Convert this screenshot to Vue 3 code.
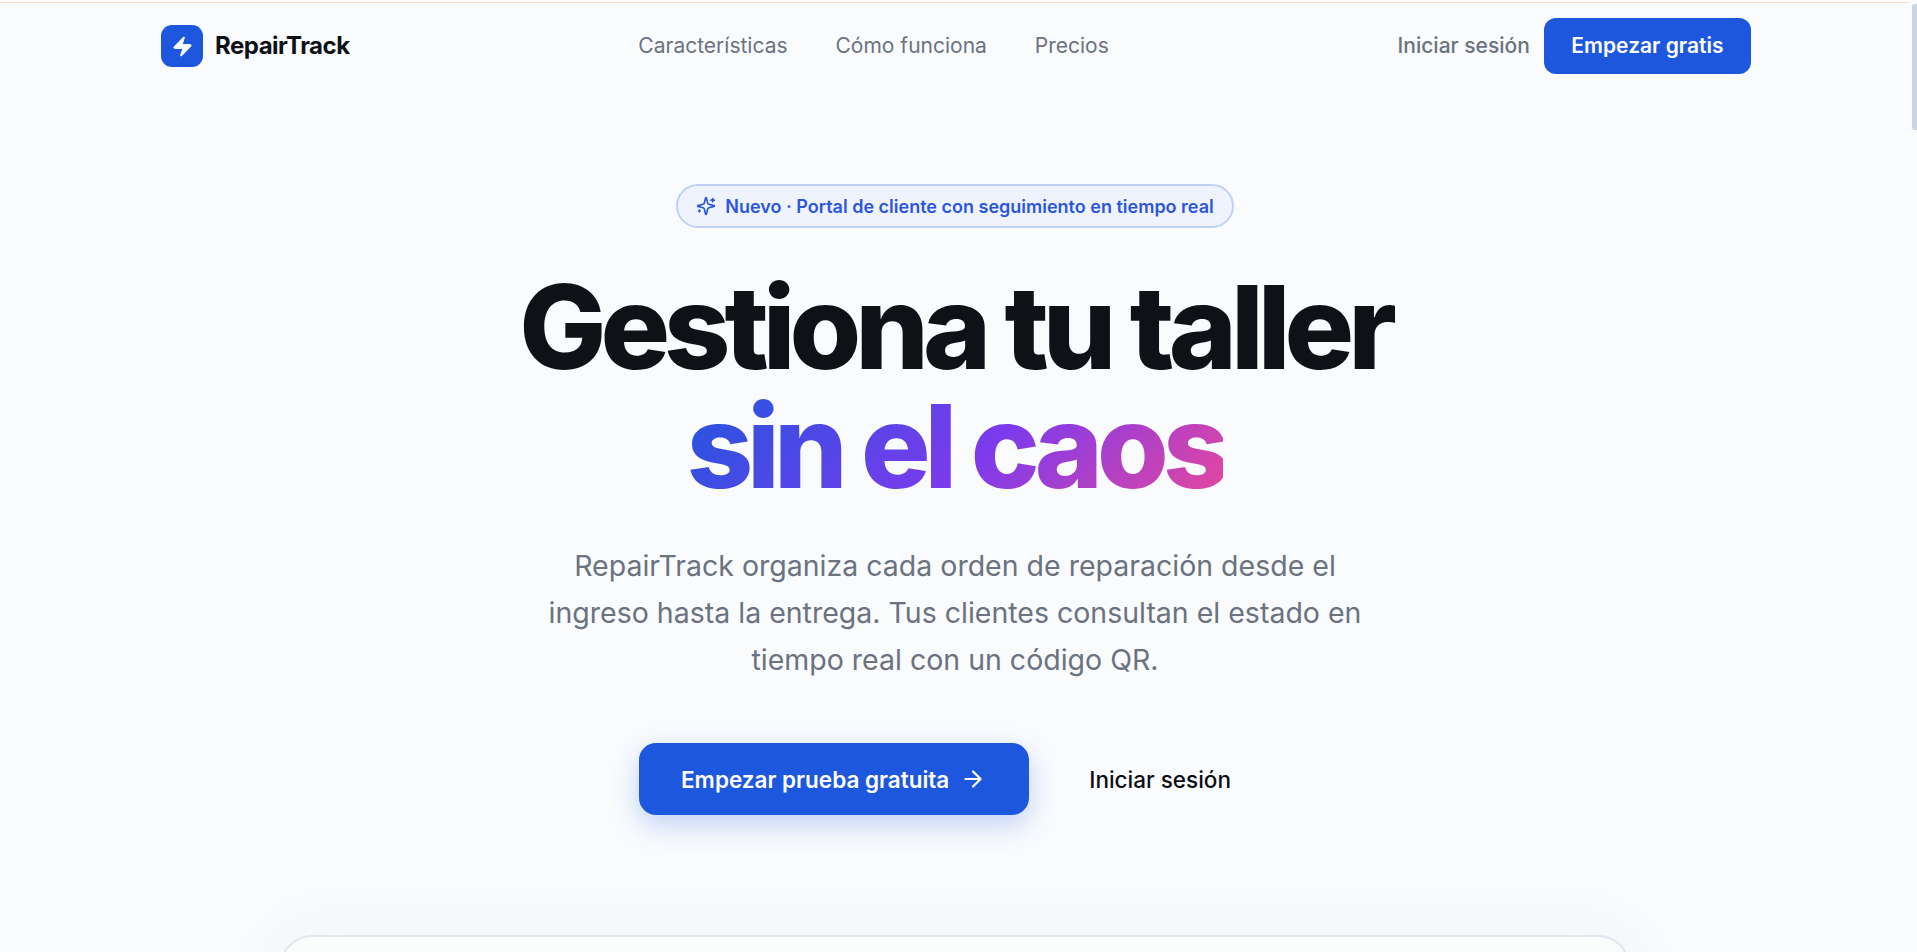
<template>
  <div class="page">
    <div class="top-line"></div>
    <header class="nav">
      <a class="brand" href="#">
        <span class="brand-icon">
          <svg width="23" height="23" viewBox="0 0 24 24" fill="#fff" stroke="#fff" stroke-width="1" stroke-linejoin="round">
            <path d="M4 14a1 1 0 0 1-.78-1.630l9.900-10.200a.5.5 0 0 1 .86.460l-1.920 6.020A1 1 0 0 0 13 10h7a1 1 0 0 1 .78 1.630l-9.900 10.200a.5.5 0 0 1-.86-.460l1.920-6.020A1 1 0 0 0 11 14z" />
          </svg>
        </span>
        <span class="brand-name">RepairTrack</span>
      </a>
      <nav class="links">
        <a v-for="link in links" :key="link" href="#">{{ link }}</a>
      </nav>
      <div class="actions">
        <a class="login" href="#">Iniciar sesión</a>
        <a class="btn-small" href="#">Empezar gratis</a>
      </div>
    </header>

    <main class="hero">
      <div class="badge">
        <svg width="20" height="20" viewBox="0 0 24 24" fill="none" stroke="currentColor" stroke-width="2" stroke-linecap="round" stroke-linejoin="round">
          <path d="M9.937 15.5A2 2 0 0 0 8.500 14.063l-6.135-1.582a.5.5 0 0 1 0-.962L8.500 9.936A2 2 0 0 0 9.937 8.500l1.582-6.135a.5.5 0 0 1 .963 0L14.063 8.500A2 2 0 0 0 15.500 9.937l6.135 1.581a.5.5 0 0 1 0 .964L15.500 14.063a2 2 0 0 0-1.437 1.437l-1.582 6.135a.5.5 0 0 1-.963 0z" />
          <path d="M20 3v4M22 5h-4M4 17v2M5 18H3" />
        </svg>
        <span>Nuevo · Portal de cliente con seguimiento en tiempo real</span>
      </div>
      <h1>
        Gestiona tu taller<br />
        <span class="gradient">sin el caos</span>
      </h1>
      <p class="lead">
        RepairTrack organiza cada orden de reparación desde el ingreso hasta la entrega. Tus clientes consultan el estado en tiempo real con un código QR.
      </p>
      <div class="cta">
        <a class="btn-main" href="#">
          Empezar prueba gratuita
          <svg width="26" height="26" viewBox="0 0 24 24" fill="none" stroke="currentColor" stroke-width="2" stroke-linecap="round" stroke-linejoin="round">
            <path d="M5 12h14M12 5l7 7-7 7" />
          </svg>
        </a>
        <a class="btn-ghost" href="#">Iniciar sesión</a>
      </div>
      <div class="preview-wrap">
        <div class="preview"></div>
      </div>
    </main>
    <div class="scroll-thumb"></div>
  </div>
</template>

<script setup>
const links = ["Características", "Cómo funciona", "Precios"];
</script>

<style>
html,
body {
  margin: 0;
  height: 100%;
  overflow: hidden;
  background: #f9fbfd;
}
</style>

<style scoped>
.page {
  position: relative;
  height: 952px;
  overflow: hidden;
  padding-right: 7px;
  box-sizing: border-box;
  background: #f9fbfd;
  font-family: Inter, "Noto Sans", sans-serif;
  color: #0f1117;
}

a {
  text-decoration: none;
  color: inherit;
}

.top-line {
  height: 2px;
  background: #fff;
  border-bottom: 1px solid #fbdcc8;
}

.nav {
  display: flex;
  justify-content: space-between;
  align-items: center;
  height: 86px;
  margin: 0 159px 0 161px;
}

.brand {
  display: flex;
  align-items: center;
  gap: 12px;
}

.brand-icon {
  display: flex;
  align-items: center;
  justify-content: center;
  width: 42px;
  height: 42px;
  border-radius: 11px;
  background: #1d57de;
}

.brand-name {
  padding-bottom: 2px;
  font-size: 24px;
  font-weight: 700;
  letter-spacing: -0.5px;
}

.links {
  display: flex;
  gap: 48px;
  padding-bottom: 2px;
  font-size: 21px;
  color: #6b7280;
}

.actions {
  display: flex;
  align-items: center;
  gap: 14px;
}

.login {
  padding-bottom: 2px;
  font-size: 21px;
  font-weight: 500;
  color: #6b7280;
}

.btn-small {
  padding: 0 27.5px;
  line-height: 55px;
  padding-bottom: 1px;
  border-radius: 12px;
  background: #1d57de;
  color: #fff;
  font-size: 21px;
  font-weight: 600;
}

.hero {
  display: flex;
  flex-direction: column;
  align-items: center;
  padding-top: 95px;
}

.badge {
  display: flex;
  align-items: center;
  gap: 9px;
  height: 40px;
  padding: 0 18px;
  border: 2px solid #c1d0f7;
  border-radius: 22px;
  background: #eff3fe;
  color: #2a56de;
  font-size: 18px;
  font-weight: 600;
}

h1 {
  margin: 40px 0 0;
  text-align: center;
  font-size: 116px;
  line-height: 119px;
  font-weight: 800;
  letter-spacing: -0.052em;
}

.gradient {
  background: linear-gradient(135deg, #1d57de, #7c3aed 55%, #ec4899);
  -webkit-background-clip: text;
  background-clip: text;
  color: transparent;
}

.lead {
  width: 830px;
  margin: 36px 0 0;
  text-align: center;
  font-size: 28.5px;
  line-height: 47px;
  color: #6b7280;
}

.cta {
  display: flex;
  align-items: center;
  gap: 20px;
  margin-top: 60px;
}

.btn-main {
  display: flex;
  align-items: center;
  gap: 11px;
  height: 72px;
  padding: 0 43px 0 42px;
  border-radius: 17px;
  background: #1d57de;
  color: #fff;
  font-size: 22.5px;
  font-weight: 600;
  box-shadow: 0 10px 28px rgba(29, 87, 222, 0.25);
}

.btn-ghost {
  padding: 0 40px;
  font-size: 22.5px;
  font-weight: 500;
  color: #0b0d12;
}

.preview-wrap {
  width: 100%;
  margin-top: 120px;
  display: flex;
  justify-content: center;
}

.preview {
  width: 1350px;
  height: 200px;
  border: 2px solid #e3e6ee;
  border-radius: 32px 32px 0 0;
  background: #fbfcfc;
  box-sizing: border-box;
  box-shadow: 0 0 70px rgba(60, 70, 140, 0.05);
}

.scroll-thumb {
  position: absolute;
  top: 4px;
  right: 0;
  width: 5px;
  height: 126px;
  border-radius: 3px 0 0 3px;
  background: #c9d5e0;
}
</style>
